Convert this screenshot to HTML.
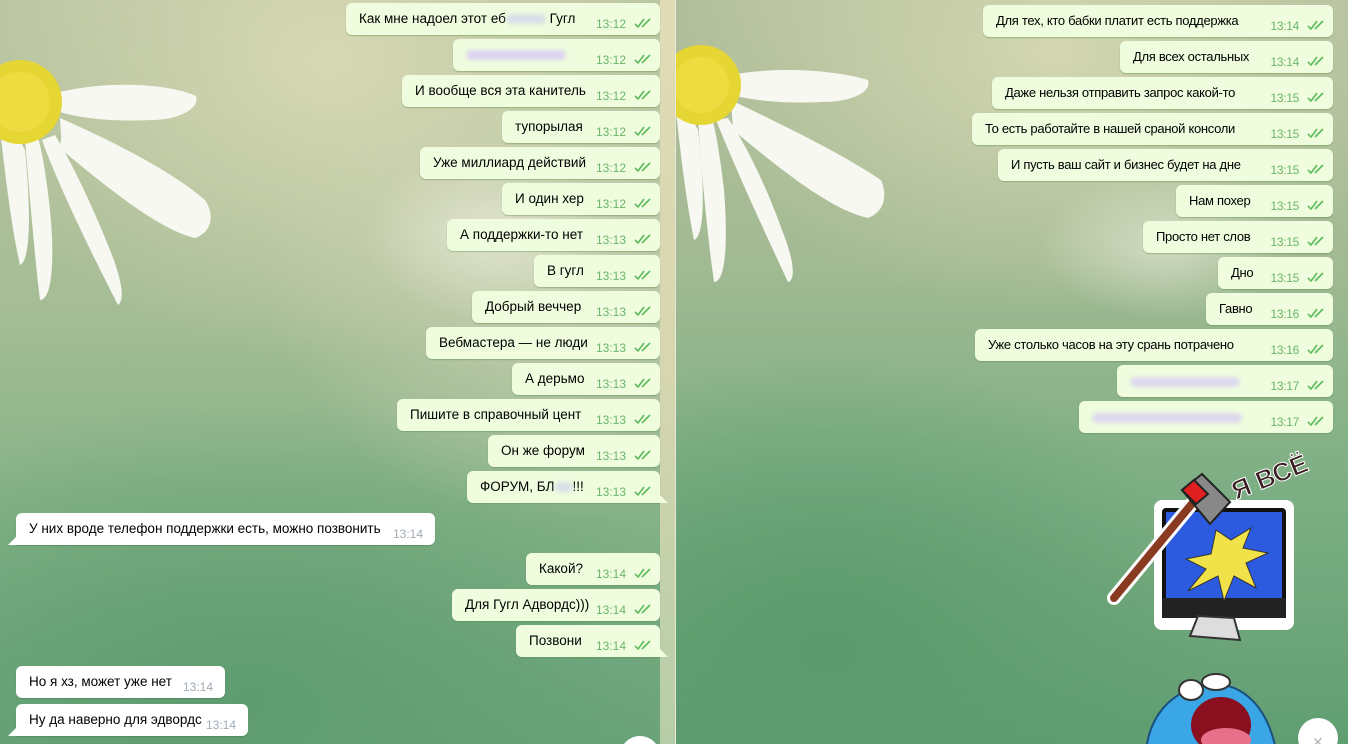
<!DOCTYPE html>
<html><head><meta charset="utf-8">
<style>
*{margin:0;padding:0;box-sizing:border-box}
body{width:1348px;height:744px;overflow:hidden;position:relative;font-family:"Liberation Sans",sans-serif;background:#fff}
.panel{position:absolute;top:0;height:744px;overflow:hidden}
#L{left:0;width:675px;background:
 radial-gradient(ellipse 380px 300px at 330px 60px,#d6d8b4 0%,rgba(214,216,180,0) 100%),
 radial-gradient(ellipse 300px 260px at 560px 260px,#c7cfb0 0%,rgba(199,207,176,0) 100%),
 radial-gradient(ellipse 500px 300px at 250px 700px,#5e9c70 0%,rgba(94,156,112,0) 100%),
 linear-gradient(180deg,#b9c3a0 0%,#a6bd95 40%,#85b287 70%,#6da47b 100%)}
#R{left:676px;width:672px;background:
 radial-gradient(ellipse 380px 260px at 380px 50px,#d3d6b2 0%,rgba(211,214,178,0) 100%),
 radial-gradient(ellipse 400px 300px at 150px 650px,#5a9a6c 0%,rgba(90,154,108,0) 100%),
 linear-gradient(180deg,#b3bf9b 0%,#a2ba93 35%,#7eaf84 65%,#5f9e71 100%)}
#div{position:absolute;left:675px;top:0;width:1px;height:744px;background:#e8e8d8}
.strip{position:absolute;left:660px;top:0;width:15px;height:744px;background:linear-gradient(180deg,#e0dcb6,#d6d6b0 50%,#b5cda8)}
.b{position:absolute;height:32px;background:#effdde;border-radius:6px;box-shadow:0 1px 1px rgba(90,140,70,.45);font-size:13.5px;color:#000;white-space:nowrap}
.b .t{position:absolute;left:13px;top:8px}
.b .tm{position:absolute;right:34px;top:14px;font-size:12px;color:#6cb56a}
.b svg{position:absolute;right:8px;top:15px}
.b.in{background:#fff;box-shadow:0 1px 1px rgba(60,100,60,.35)}
.b.in .tm{right:12px;color:#a0acb6}
.blur{display:inline-block;height:10px;border-radius:5px;background:#d8dfe8;filter:blur(2px);vertical-align:middle}
.tailo{position:absolute;width:8px;height:8px;background:#effdde;clip-path:polygon(0 0,0 100%,100% 100%)}
.taili{position:absolute;width:8px;height:8px;background:#fff;clip-path:polygon(100% 0,100% 100%,0 100%)}
#R .b{font-size:13px;letter-spacing:-0.3px}
</style></head><body>
<div class="panel" id="L">
 <svg style="position:absolute;left:0;top:0" width="260" height="340" viewBox="0 0 260 340">
  <g fill="#f7f8f1">
   <path d="M60 92 C110 80 170 84 196 96 C200 108 180 120 150 120 C110 122 80 118 60 112z"/>
   <path d="M60 118 C110 140 170 170 205 200 C215 215 212 232 195 238 C160 230 110 190 62 150z"/>
   <path d="M62 135 C100 160 150 190 200 215 C170 200 110 170 60 145z"/>
   <path d="M42 140 C60 190 95 260 118 305 C125 300 122 280 110 250 C90 200 70 160 55 135z"/>
   <path d="M25 140 C30 200 35 260 40 300 C52 300 55 260 50 210 C46 175 42 150 38 138z"/>
   <path d="M0 130 C5 170 10 220 20 265 C32 260 30 200 25 150 L15 130z"/>
  </g>
  <circle cx="20" cy="102" r="42" fill="#e6d634"/>
  <circle cx="20" cy="102" r="30" fill="#f0e04a" opacity=".6"/>
 </svg>
 <div style="position:absolute;left:360px;top:150px;width:260px;height:170px;border-radius:50%;background:radial-gradient(ellipse,rgba(240,242,228,.6),rgba(240,242,228,0) 70%)"></div>
 <div class="strip"></div>

 <div class="b" style="left:346px;width:314px;top:3px"><span class="t">Как мне надоел этот еб<span class="blur" style="width:40px"></span> Гугл</span><span class="tm">13:12</span><svg width="18" height="10" viewBox="0 0 18 10"><path d="M1 6l3 3 6-8M8 9l8-8" fill="none" stroke="#5dbb5b" stroke-width="1.6"/></svg></div>
 <div class="b" style="left:453px;width:207px;top:39px"><span class="t"><span class="blur" style="width:100px;background:#dcd4f0"></span></span><span class="tm">13:12</span><svg width="18" height="10" viewBox="0 0 18 10"><path d="M1 6l3 3 6-8M8 9l8-8" fill="none" stroke="#5dbb5b" stroke-width="1.6"/></svg></div>
 <div class="b" style="left:402px;width:258px;top:75px"><span class="t">И вообще вся эта канитель</span><span class="tm">13:12</span><svg width="18" height="10" viewBox="0 0 18 10"><path d="M1 6l3 3 6-8M8 9l8-8" fill="none" stroke="#5dbb5b" stroke-width="1.6"/></svg></div>
 <div class="b" style="left:502px;width:158px;top:111px"><span class="t">тупорылая</span><span class="tm">13:12</span><svg width="18" height="10" viewBox="0 0 18 10"><path d="M1 6l3 3 6-8M8 9l8-8" fill="none" stroke="#5dbb5b" stroke-width="1.6"/></svg></div>
 <div class="b" style="left:420px;width:240px;top:147px"><span class="t">Уже миллиард действий</span><span class="tm">13:12</span><svg width="18" height="10" viewBox="0 0 18 10"><path d="M1 6l3 3 6-8M8 9l8-8" fill="none" stroke="#5dbb5b" stroke-width="1.6"/></svg></div>
 <div class="b" style="left:502px;width:158px;top:183px"><span class="t">И один хер</span><span class="tm">13:12</span><svg width="18" height="10" viewBox="0 0 18 10"><path d="M1 6l3 3 6-8M8 9l8-8" fill="none" stroke="#5dbb5b" stroke-width="1.6"/></svg></div>
 <div class="b" style="left:447px;width:213px;top:219px"><span class="t">А поддержки-то нет</span><span class="tm">13:13</span><svg width="18" height="10" viewBox="0 0 18 10"><path d="M1 6l3 3 6-8M8 9l8-8" fill="none" stroke="#5dbb5b" stroke-width="1.6"/></svg></div>
 <div class="b" style="left:534px;width:126px;top:255px"><span class="t">В гугл</span><span class="tm">13:13</span><svg width="18" height="10" viewBox="0 0 18 10"><path d="M1 6l3 3 6-8M8 9l8-8" fill="none" stroke="#5dbb5b" stroke-width="1.6"/></svg></div>
 <div class="b" style="left:472px;width:188px;top:291px"><span class="t">Добрый веччер</span><span class="tm">13:13</span><svg width="18" height="10" viewBox="0 0 18 10"><path d="M1 6l3 3 6-8M8 9l8-8" fill="none" stroke="#5dbb5b" stroke-width="1.6"/></svg></div>
 <div class="b" style="left:426px;width:234px;top:327px"><span class="t">Вебмастера — не люди</span><span class="tm">13:13</span><svg width="18" height="10" viewBox="0 0 18 10"><path d="M1 6l3 3 6-8M8 9l8-8" fill="none" stroke="#5dbb5b" stroke-width="1.6"/></svg></div>
 <div class="b" style="left:512px;width:148px;top:363px"><span class="t">А дерьмо</span><span class="tm">13:13</span><svg width="18" height="10" viewBox="0 0 18 10"><path d="M1 6l3 3 6-8M8 9l8-8" fill="none" stroke="#5dbb5b" stroke-width="1.6"/></svg></div>
 <div class="b" style="left:397px;width:263px;top:399px"><span class="t">Пишите в справочный цент</span><span class="tm">13:13</span><svg width="18" height="10" viewBox="0 0 18 10"><path d="M1 6l3 3 6-8M8 9l8-8" fill="none" stroke="#5dbb5b" stroke-width="1.6"/></svg></div>
 <div class="b" style="left:488px;width:172px;top:435px"><span class="t">Он же форум</span><span class="tm">13:13</span><svg width="18" height="10" viewBox="0 0 18 10"><path d="M1 6l3 3 6-8M8 9l8-8" fill="none" stroke="#5dbb5b" stroke-width="1.6"/></svg></div>
 <div class="b" style="left:467px;width:193px;top:471px;border-bottom-right-radius:0"><span class="t">ФОРУМ, БЛ<span class="blur" style="width:18px"></span>!!!</span><span class="tm">13:13</span><svg width="18" height="10" viewBox="0 0 18 10"><path d="M1 6l3 3 6-8M8 9l8-8" fill="none" stroke="#5dbb5b" stroke-width="1.6"/></svg></div>
 <div class="tailo" style="left:660px;top:495px"></div>

 <div class="b in" style="left:16px;width:419px;top:513px;border-bottom-left-radius:0"><span class="t">У них вроде телефон поддержки есть, можно позвонить</span><span class="tm">13:14</span></div>
 <div class="taili" style="left:8px;top:537px"></div>

 <div class="b" style="left:526px;width:134px;top:553px"><span class="t">Какой?</span><span class="tm">13:14</span><svg width="18" height="10" viewBox="0 0 18 10"><path d="M1 6l3 3 6-8M8 9l8-8" fill="none" stroke="#5dbb5b" stroke-width="1.6"/></svg></div>
 <div class="b" style="left:452px;width:208px;top:589px"><span class="t">Для Гугл Адвордс)))</span><span class="tm">13:14</span><svg width="18" height="10" viewBox="0 0 18 10"><path d="M1 6l3 3 6-8M8 9l8-8" fill="none" stroke="#5dbb5b" stroke-width="1.6"/></svg></div>
 <div class="b" style="left:516px;width:144px;top:625px;border-bottom-right-radius:0"><span class="t">Позвони</span><span class="tm">13:14</span><svg width="18" height="10" viewBox="0 0 18 10"><path d="M1 6l3 3 6-8M8 9l8-8" fill="none" stroke="#5dbb5b" stroke-width="1.6"/></svg></div>
 <div class="tailo" style="left:660px;top:649px"></div>

 <div class="b in" style="left:16px;width:209px;top:666px"><span class="t">Но я хз, может уже нет</span><span class="tm">13:14</span></div>
 <div class="b in" style="left:16px;width:232px;top:704px;border-bottom-left-radius:0"><span class="t">Ну да наверно для эдвордс</span><span class="tm">13:14</span></div>
 <div class="taili" style="left:8px;top:728px"></div>
 <div style="position:absolute;left:620px;top:736px;width:40px;height:40px;border-radius:50%;background:#fff"></div>
</div>
<div id="div"></div>
<div class="panel" id="R">
 <svg style="position:absolute;left:0;top:0" width="240" height="320" viewBox="0 0 240 320">
  <g fill="#f7f8f1">
   <path d="M55 75 C100 66 160 70 192 80 C196 92 176 102 146 102 C106 104 76 100 55 95z"/>
   <path d="M55 100 C100 122 160 150 205 180 C212 196 208 212 192 218 C155 210 105 170 57 130z"/>
   <path d="M40 120 C60 170 90 235 112 282 C120 280 118 260 106 230 C88 180 68 142 52 118z"/>
   <path d="M22 120 C26 180 32 240 38 282 C50 282 52 240 48 190 C44 156 40 132 36 118z"/>
   <path d="M0 110 C4 150 10 200 18 240 C30 236 28 180 22 130 L12 110z"/>
  </g>
  <circle cx="25" cy="85" r="40" fill="#e6d634"/>
  <circle cx="25" cy="85" r="28" fill="#f0e04a" opacity=".6"/>
 </svg>
 <div style="position:absolute;left:360px;top:170px;width:260px;height:150px;border-radius:50%;background:radial-gradient(ellipse,rgba(240,242,228,.55),rgba(240,242,228,0) 70%)"></div>

 <div class="b" style="left:307px;width:350px;top:5px"><span class="t">Для тех, кто бабки платит есть поддержка</span><span class="tm">13:14</span><svg width="18" height="10" viewBox="0 0 18 10"><path d="M1 6l3 3 6-8M8 9l8-8" fill="none" stroke="#5dbb5b" stroke-width="1.6"/></svg></div>
 <div class="b" style="left:444px;width:213px;top:41px"><span class="t">Для всех остальных</span><span class="tm">13:14</span><svg width="18" height="10" viewBox="0 0 18 10"><path d="M1 6l3 3 6-8M8 9l8-8" fill="none" stroke="#5dbb5b" stroke-width="1.6"/></svg></div>
 <div class="b" style="left:316px;width:341px;top:77px"><span class="t">Даже нельзя отправить запрос какой-то</span><span class="tm">13:15</span><svg width="18" height="10" viewBox="0 0 18 10"><path d="M1 6l3 3 6-8M8 9l8-8" fill="none" stroke="#5dbb5b" stroke-width="1.6"/></svg></div>
 <div class="b" style="left:296px;width:361px;top:113px"><span class="t">То есть работайте в нашей сраной консоли</span><span class="tm">13:15</span><svg width="18" height="10" viewBox="0 0 18 10"><path d="M1 6l3 3 6-8M8 9l8-8" fill="none" stroke="#5dbb5b" stroke-width="1.6"/></svg></div>
 <div class="b" style="left:322px;width:335px;top:149px"><span class="t">И пусть ваш сайт и бизнес будет на дне</span><span class="tm">13:15</span><svg width="18" height="10" viewBox="0 0 18 10"><path d="M1 6l3 3 6-8M8 9l8-8" fill="none" stroke="#5dbb5b" stroke-width="1.6"/></svg></div>
 <div class="b" style="left:500px;width:157px;top:185px"><span class="t">Нам похер</span><span class="tm">13:15</span><svg width="18" height="10" viewBox="0 0 18 10"><path d="M1 6l3 3 6-8M8 9l8-8" fill="none" stroke="#5dbb5b" stroke-width="1.6"/></svg></div>
 <div class="b" style="left:467px;width:190px;top:221px"><span class="t">Просто нет слов</span><span class="tm">13:15</span><svg width="18" height="10" viewBox="0 0 18 10"><path d="M1 6l3 3 6-8M8 9l8-8" fill="none" stroke="#5dbb5b" stroke-width="1.6"/></svg></div>
 <div class="b" style="left:542px;width:115px;top:257px"><span class="t">Дно</span><span class="tm">13:15</span><svg width="18" height="10" viewBox="0 0 18 10"><path d="M1 6l3 3 6-8M8 9l8-8" fill="none" stroke="#5dbb5b" stroke-width="1.6"/></svg></div>
 <div class="b" style="left:530px;width:127px;top:293px"><span class="t">Гавно</span><span class="tm">13:16</span><svg width="18" height="10" viewBox="0 0 18 10"><path d="M1 6l3 3 6-8M8 9l8-8" fill="none" stroke="#5dbb5b" stroke-width="1.6"/></svg></div>
 <div class="b" style="left:299px;width:358px;top:329px"><span class="t">Уже столько часов на эту срань потрачено</span><span class="tm">13:16</span><svg width="18" height="10" viewBox="0 0 18 10"><path d="M1 6l3 3 6-8M8 9l8-8" fill="none" stroke="#5dbb5b" stroke-width="1.6"/></svg></div>
 <div class="b" style="left:441px;width:216px;top:365px"><span class="t"><span class="blur" style="width:110px;background:#dcd8ee"></span></span><span class="tm">13:17</span><svg width="18" height="10" viewBox="0 0 18 10"><path d="M1 6l3 3 6-8M8 9l8-8" fill="none" stroke="#5dbb5b" stroke-width="1.6"/></svg></div>
 <div class="b" style="left:403px;width:254px;top:401px"><span class="t"><span class="blur" style="width:150px;background:#dcd8ee"></span></span><span class="tm">13:17</span><svg width="18" height="10" viewBox="0 0 18 10"><path d="M1 6l3 3 6-8M8 9l8-8" fill="none" stroke="#5dbb5b" stroke-width="1.6"/></svg></div>

 <svg style="position:absolute;left:430px;top:440px" width="220" height="210" viewBox="0 0 220 210">
  <text x="130" y="60" transform="rotate(-22 130 60)" font-family="Liberation Sans,sans-serif" font-weight="bold" font-size="26" fill="#3a1f22" stroke="#fff" stroke-width="1">Я ВСЁ</text>
  <rect x="48" y="60" width="140" height="130" rx="8" fill="#fff"/>
  <rect x="56" y="68" width="124" height="110" rx="4" fill="#111"/>
  <rect x="60" y="72" width="116" height="86" fill="#2c5be0"/>
  <rect x="56" y="158" width="124" height="20" fill="#222"/>
  <path d="M92 176l-8 20 50 4 -6-22z" fill="#ddd" stroke="#333" stroke-width="2"/>
  <path d="M110 90l15 10 20-12-8 20 25 5-22 10 10 25-22-12-10 25-6-25-30 15 18-22-20-10 25-5z" fill="#f2e24a" stroke="#333" stroke-width="1"/>
  <path d="M8 158l86-104" stroke="#fff" stroke-width="14" stroke-linecap="round"/>
  <path d="M8 158l86-104" stroke="#8b3a22" stroke-width="8" stroke-linecap="round"/>
  <path d="M76 50l20-16 28 28-20 22z" fill="#888" stroke="#222" stroke-width="2"/>
  <path d="M76 50l12-10 14 14-12 10z" fill="#e02020" stroke="#222" stroke-width="2"/>
 </svg>
 <svg style="position:absolute;left:460px;top:670px" width="160" height="80" viewBox="0 0 160 80">
  <path d="M10 80 C15 40 40 20 70 15 C100 10 130 30 140 80z" fill="#3aa6e6" stroke="#1a4f80" stroke-width="2"/>
  <ellipse cx="85" cy="55" rx="30" ry="28" fill="#8a1020"/>
  <ellipse cx="90" cy="70" rx="25" ry="12" fill="#e8708a"/>
  <ellipse cx="55" cy="20" rx="12" ry="10" fill="#fff" stroke="#333" stroke-width="2"/>
  <ellipse cx="80" cy="12" rx="14" ry="8" fill="#fff" stroke="#333" stroke-width="2"/>
 </svg>
 <div style="position:absolute;left:622px;top:718px;width:40px;height:40px;border-radius:50%;background:#fff"></div>
 <div style="position:absolute;left:636px;top:734px;color:#b0b8b0;font-size:14px">✕</div>
</div>
</body></html>
